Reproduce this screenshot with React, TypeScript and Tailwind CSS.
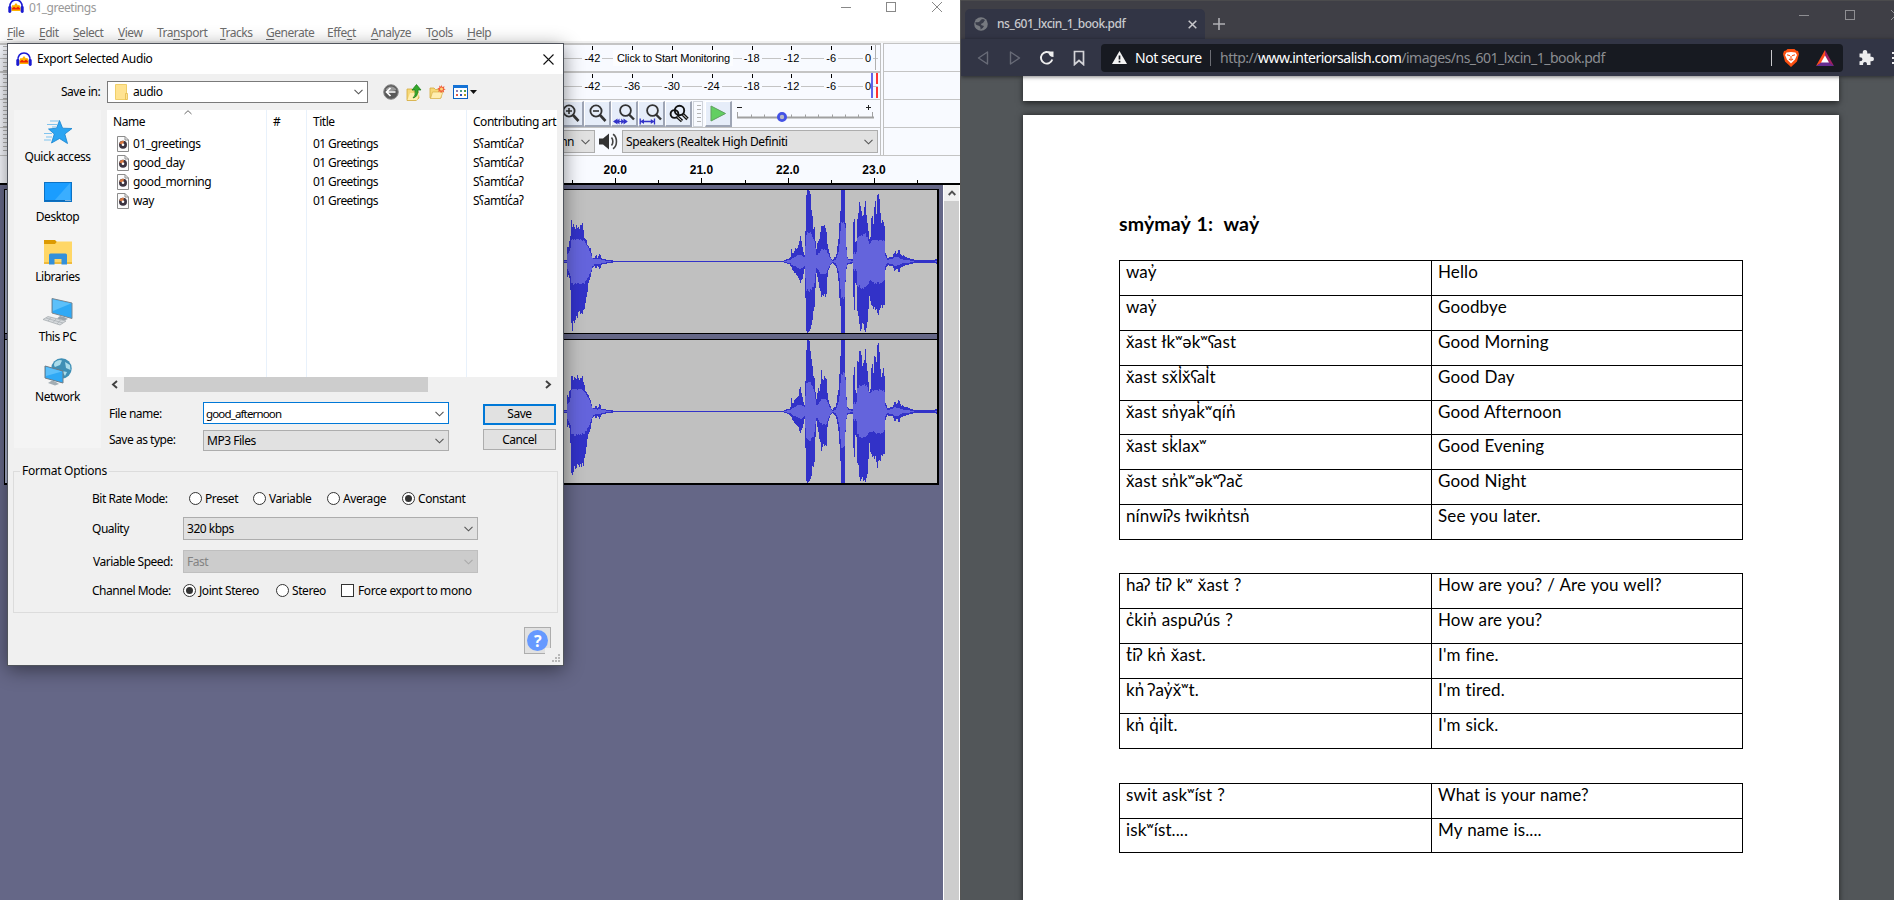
import React from "react";

/* ---------- shared bits ---------- */

const UI = "font-['Noto_Sans','Open_Sans',sans-serif] text-[12px] leading-[16px] tracking-[-0.48px] whitespace-nowrap";

function Chevron({ className = "text-[#555]" }: { className?: string }) {
  return (
    <svg width="9" height="6" viewBox="0 0 9 6" className={`shrink-0 ${className}`}>
      <path d="M0.5 0.8 L4.5 4.8 L8.5 0.8" fill="none" stroke="currentColor" strokeWidth="1.1" />
    </svg>
  );
}

function Headphones() {
  return (
    <svg width="16" height="15" viewBox="0 0 16 15" className="shrink-0">
      <path d="M3.4 12 C3 6.5 5 5 6 6.5 L8 4 L10 6.5 C11.5 5 13 7 12.6 12 Z" fill="#ffb300" />
      <path d="M4 9.5 L6 7.8 L8 9.3 L10 7.6 L12 9.5 L12 10.6 L4 10.6 Z" fill="#ee2200" />
      <path d="M2 9 C1.2 3.5 4.5 1 8 1 C11.5 1 14.8 3.5 14 9" fill="none" stroke="#1a1ad2" strokeWidth="1.6" />
      <rect x="0.3" y="7" width="3" height="7" rx="1.4" fill="#1a1ad2" />
      <rect x="12.7" y="7" width="3" height="7" rx="1.4" fill="#1a1ad2" />
    </svg>
  );
}

/* ---------- audio editor ---------- */

const MENUS: [string, string, string, string][] = [
  ["", "F", "ile", "w-[32px]"],
  ["", "E", "dit", "w-[34px]"],
  ["", "S", "elect", "w-[45px]"],
  ["", "V", "iew", "w-[39px]"],
  ["Tra", "n", "sport", "w-[63px]"],
  ["", "T", "racks", "w-[46px]"],
  ["", "G", "enerate", "w-[61px]"],
  ["Effe", "c", "t", "w-[44px]"],
  ["", "A", "nalyze", "w-[55px]"],
  ["T", "o", "ols", "w-[41px]"],
  ["", "H", "elp", "w-[30px]"],
];

/* x, outer up, outer down, inner up, inner down (in thirds of a pixel) */
const ENVELOPE: number[][] = [
  [39, 4, 4, 2, 2], [50, 4, 4, 2, 2], [51, 62, 60, 20, 20], [54, 35, 35, 25, 25], [58, 64, 50, 30, 35], [61, 55, 55, 30, 35],
  [63, 120, 195, 68, 68], [66, 118, 203, 68, 68], [72, 98, 175, 68, 70], [78, 102, 168, 66, 70], [90, 104, 158, 66, 68],
  [98, 116, 168, 66, 68], [104, 74, 140, 60, 66], [110, 64, 110, 50, 55], [116, 48, 64, 38, 45], [122, 36, 48, 25, 32],
  [127, 12, 18, 10, 15], [135, 12, 12, 6, 8], [138, 24, 26, 8, 8], [142, 8, 12, 6, 8], [150, 26, 24, 8, 8], [155, 8, 8, 4, 4],
  [180, 5, 5, 2, 2], [188, 4, 4, 0, 0], [189, 1.5, 1.5, 0, 0], [701, 1.5, 1.5, 0, 0], [703, 5, 4, 2, 2], [718, 9, 8, 4, 4],
  [722, 14, 14, 6, 6], [725, 44, 18, 8, 10], [728, 22, 26, 10, 12], [736, 40, 36, 14, 14], [745, 45, 45, 20, 20], [751, 78, 68, 20, 22],
  [757, 48, 52, 18, 20], [765, 14, 18, 12, 14], [768, 180, 205, 80, 84], [772, 215, 215, 85, 86], [780, 212, 206, 90, 90],
  [786, 148, 190, 76, 80], [790, 112, 158, 70, 74], [795, 88, 140, 60, 60], [798, 26, 24, 18, 20], [803, 62, 50, 20, 22],
  [810, 72, 85, 30, 34], [815, 124, 118, 38, 38], [819, 98, 102, 38, 38], [829, 106, 110, 36, 38], [833, 48, 36, 26, 26],
  [840, 18, 14, 12, 10], [847, 3, 3, 2, 2], [852, 12, 10, 3, 3], [858, 14, 14, 6, 6], [865, 62, 52, 26, 26], [870, 150, 130, 60, 60],
  [872, 160, 150, 100, 90], [873, 216, 216, 115, 110], [885, 216, 216, 115, 110], [886, 120, 75, 110, 60], [889, 50, 25, 40, 20],
  [893, 10, 8, 5, 4], [908, 6, 6, 2, 2], [909, 108, 90, 20, 20], [914, 132, 155, 30, 30], [917, 48, 50, 20, 20], [920, 60, 80, 30, 30],
  [922, 140, 150, 72, 70], [932, 186, 210, 78, 78], [938, 125, 190, 82, 80], [946, 182, 213, 82, 80], [952, 128, 192, 75, 75],
  [958, 62, 95, 55, 60], [961, 65, 120, 55, 60], [966, 158, 130, 62, 62], [970, 112, 142, 62, 62], [975, 182, 145, 65, 65],
  [979, 150, 145, 65, 65], [983, 208, 165, 65, 65], [989, 172, 142, 65, 65], [994, 108, 136, 65, 64], [1000, 128, 136, 65, 62],
  [1004, 105, 134, 60, 58], [1006, 30, 26, 18, 15], [1012, 10, 12, 5, 5], [1028, 14, 14, 8, 8], [1035, 32, 32, 14, 14], [1041, 20, 20, 12, 12],
  [1047, 40, 36, 12, 12], [1052, 18, 18, 8, 8], [1060, 18, 14, 6, 5], [1080, 9, 8, 3, 3], [1100, 4, 4, 0, 0], [1154, 4, 4, 0, 0], [1160, 9, 8, 3, 3],
];

function sample(x: number): number[] {
  let i = 0;
  while (i < ENVELOPE.length - 2 && ENVELOPE[i + 1][0] < x) i++;
  const a = ENVELOPE[i];
  const b = ENVELOPE[i + 1];
  const t = Math.min(1, Math.max(0, (x - a[0]) / (b[0] - a[0])));
  return [1, 2, 3, 4].map((k) => a[k] + (b[k] - a[k]) * t);
}

function noise(n: number): number {
  const s = Math.sin(n * 12.9898) * 43758.5453;
  return s - Math.floor(s);
}

function Waveform({ seed }: { seed: number }) {
  const outer: React.ReactNode[] = [];
  const inner: React.ReactNode[] = [];
  for (let c = 0; c < 374; c++) {
    const [up, down, iu, id] = sample(39 + c * 3 + 1.5);
    const j1 = up > 6 && up < 200 ? 0.88 + 0.2 * noise(c + seed) : 1;
    const j2 = down > 6 && down < 200 ? 0.92 + 0.14 * noise(c * 3 + seed) : 1;
    const top = Math.min(71.5, (up * j1) / 3);
    const bot = Math.min(71.5, (down * j2) / 3);
    outer.push(<rect key={c} x={c} y={71.5 - top} width="1" height={top + bot} />);
    if (iu > 1) {
      const a = (iu * (0.94 + 0.1 * noise(c * 7 + seed))) / 3;
      const b = (id * (0.94 + 0.1 * noise(c * 5 + seed))) / 3;
      inner.push(<rect key={c} x={c} y={71.5 - a} width="1" height={a + b} />);
    }
  }
  return (
    <svg width="374" height="143" viewBox="0 0 374 143" shapeRendering="crispEdges" className="ml-auto block">
      <g fill="#3232c8">{outer}</g>
      <g fill="#6464dc">{inner}</g>
    </svg>
  );
}

function MeterScale({ values }: { values: string[] }) {
  return (
    <div className="absolute top-0 left-[573px] flex h-[27px]">
      {values.map((v, i) => (
        <div key={i} className="flex w-[39.8px] flex-col items-center">
          <div className="mt-[1px] h-[4px] w-px bg-black" />
          {v && (
            <div className={`mt-[2px] bg-[#f8faff] px-[2px] font-['Liberation_Sans',sans-serif] text-[11px] leading-[12px] text-black ${v === "0" ? "mr-[7px]" : "mr-px"}`}>{v}</div>
          )}
        </div>
      ))}
    </div>
  );
}

function Grip({ className }: { className: string }) {
  return <div className={`bg-[repeating-linear-gradient(to_bottom,#b4b4b4_0_1px,transparent_1px_4px)] ${className}`} />;
}

function ToolButton({ children }: { children: React.ReactNode }) {
  return (
    <div className="mt-px flex h-[26px] w-[27px] items-center justify-center border-r-2 border-b-2 border-[#9ea5b5] border-t border-l border-t-white border-l-white bg-[#e6edf9]">
      {children}
    </div>
  );
}

function Lens({ children }: { children?: React.ReactNode }) {
  return (
    <svg width="24" height="23" viewBox="0 0 24 23" className="shrink-0">
      <path d="M14.500 12.500 L20.500 19" stroke="#333" strokeWidth="2.6" />
      <circle cx="11" cy="9" r="5.600" fill="none" stroke="#333" strokeWidth="1.8" />
      {children}
    </svg>
  );
}

function ZoomTools() {
  return (
    <div className="ml-[557px] flex">
      <ToolButton>
        <Lens><path d="M8 9H14M11 6V12" stroke="#333" strokeWidth="1.6" /></Lens>
      </ToolButton>
      <ToolButton>
        <Lens><path d="M8 9H14" stroke="#333" strokeWidth="1.6" /></Lens>
      </ToolButton>
      <ToolButton>
        <svg width="24" height="23" viewBox="0 0 24 23" className="shrink-0">
          <path d="M16.500 12 L22 17.500" stroke="#333" strokeWidth="2.4" />
          <circle cx="13.500" cy="8.500" r="5.400" fill="none" stroke="#333" strokeWidth="1.8" />
          <path d="M2 19.500H15" stroke="#3232c8" strokeWidth="1.2" />
          <path d="M1 19.500L5.500 16.500v6zM7.500 16.500v6L4.500 19.500zM9.200 16.500L12 19.500L9.200 22.500zM15.800 19.500L11.500 16.500v6z" fill="#3232c8" />
        </svg>
      </ToolButton>
      <ToolButton>
        <svg width="24" height="23" viewBox="0 0 24 23" className="shrink-0">
          <path d="M16.500 12 L22 17.500" stroke="#333" strokeWidth="2.4" />
          <circle cx="13.500" cy="8.500" r="5.400" fill="none" stroke="#333" strokeWidth="1.8" />
          <path d="M1.500 19.500H15M1.200 16.500V22.500M15.500 16.500V22.500" stroke="#3232c8" strokeWidth="1.3" />
          <path d="M1.500 19.500L5 17v5zM15.200 19.500L11.800 17v5z" fill="#3232c8" />
        </svg>
      </ToolButton>
      <ToolButton>
        <svg width="24" height="23" viewBox="0 0 24 23" className="shrink-0" fill="none" stroke="#111">
          <path d="M17 12.500 L21.500 17" strokeWidth="3.4" />
          <path d="M17 12.500 L21 16.500" stroke="#fff" strokeWidth="1" />
          <circle cx="13.500" cy="8.500" r="4.700" strokeWidth="1.900" />
          <circle cx="8.500" cy="12" r="3.900" strokeWidth="1.900" />
          <path d="M11.500 15 L16 19" strokeWidth="3.2" />
          <path d="M11.500 15 L15.500 18.600" stroke="#fff" strokeWidth="1" />
        </svg>
      </ToolButton>
      <div className="mt-px ml-px h-[26px] w-[10px] border border-[#cfd3da] pt-[3px] pl-[3px]">
        <Grip className="h-[18px] w-[4px]" />
      </div>
      <div className="ml-[2px]">
        <ToolButton>
          <svg width="24" height="23" viewBox="0 0 24 23" className="shrink-0">
            <path d="M5 4 L19.500 11.500 L5 19 Z" fill="#62cf62" stroke="#5f9f5f" strokeWidth="1" />
          </svg>
        </ToolButton>
      </div>
      <svg width="142" height="27" viewBox="0 0 142 27" className="ml-[2px]">
        <path d="M3 7.500H8M132 7.500H137M134.500 5V10" stroke="#222" strokeWidth="1" />
        <path d="M3 17.500H140" stroke="#a0a0a0" strokeWidth="2" />
        <path d="M3.5 12V18M17.5 14.5V18M30.5 14.5V18M44.5 14.5V18M57.5 14.5V18M71.5 14.5V18M84.5 14.5V18M98.5 14.5V18M111.500 14.5V18M124.5 14.5V18M138.5 12V18" stroke="#a0a0a0" />
        <circle cx="48" cy="17" r="3.6" fill="#b8b8c4" stroke="#4452e6" strokeWidth="2.8" />
      </svg>
    </div>
  );
}

function Timeline() {
  const labels = ["20.0", "21.0", "22.0", "23.0"];
  return (
    <div className="flex h-[29px] overflow-hidden border-b-2 border-black bg-[#f8faff]">
      <div className="ml-[572px] flex">
        {labels.map((l) => (
          <div key={l} className="flex w-[86.3px] shrink-0 flex-col">
            <div className="mt-[7px] text-center font-['Liberation_Sans',sans-serif] text-[12px] leading-[15px] font-bold text-black">{l}</div>
            <div className="mt-auto flex items-end">
              <div className="h-[3px] w-px bg-black" />
              <div className="ml-[42px] h-[5px] w-px bg-black" />
            </div>
          </div>
        ))}
        <div className="mt-auto h-[3px] w-px bg-black" />
      </div>
    </div>
  );
}

function AudioEditor() {
  return (
    <div className="relative flex h-[900px] w-[961px] flex-col overflow-hidden border-r border-[#555] bg-white">
      <div className="flex h-[22px] items-start">
        <div className="-mt-px ml-[8px]"><Headphones /></div>
        <span className={`${UI} ml-[5px] text-[#999]`}>01_greetings</span>
        <svg width="10" height="16" className="ml-auto"><path d="M0 7.500H10" stroke="#888" /></svg>
        <svg width="10" height="16" className="ml-[35px]"><rect x="0.5" y="2.5" width="9" height="9" fill="none" stroke="#888" /></svg>
        <svg width="10" height="16" className="mr-[18px] ml-[36px]"><path d="M0 2L10 12M10 2L0 12" stroke="#888" /></svg>
      </div>
      <div className={`${UI} flex h-[19px] pt-[3px] pl-[7px] text-[#6d6d6d]`}>
        {MENUS.map(([a, b, c, w]) => (
          <div key={a + b + c} className={w}>
            {a}
            <span className="underline underline-offset-2">{b}</span>
            {c}
          </div>
        ))}
      </div>
      <div className="h-[2px] bg-[#f0f0f0]" />

      <div className="flex h-[113px] bg-[#f8faff]">
        <div className="flex w-[881px] flex-col border-r border-[#c0c0c0]">
          <div className="relative h-[28px] border-t-2 border-[#c4c4c4]">
            <div className="mt-[13px] h-px w-[878px] bg-[#c4c4c4]" />
            <MeterScale values={["-42", "", "", "", "-18", "-12", "-6", "0"]} />
            <div className="absolute top-[5px] left-[613px] h-[16px] w-[120px] bg-[#fcfdff] pl-[4px] font-['Liberation_Sans',sans-serif] text-[11px] leading-[16px] tracking-[-0.15px] whitespace-nowrap text-black">
              Click to Start Monitoring
            </div>
            <div className="absolute top-0 right-[4px] h-[25px] w-px bg-[#b0b0b0]" />
          </div>
          <div className="relative h-[28px] border-t-2 border-[#c4c4c4]">
            <div className="mt-[13px] h-px w-[878px] bg-[#c4c4c4]" />
            <MeterScale values={["-42", "-36", "-30", "-24", "-18", "-12", "-6", "0"]} />
            <div className="absolute top-0 left-[871px] h-[25px] w-[2px] bg-[#6262ea]" />
            <div className="absolute top-0 left-[876px] h-[11px] w-[2px] bg-[#ff3232]" />
            <div className="absolute top-[14px] left-[876px] h-[11px] w-[2px] bg-[#ff3232]" />
          </div>
          <div className="h-[28px] border-t border-[#c4c4c4]"><ZoomTools /></div>
          <div className={`${UI} flex h-[29px] border-t border-[#c4c4c4] pt-[2px]`}>
            <div className="ml-[400px] flex h-[23px] w-[195px] items-center justify-end border border-[#adadad] bg-[#e1e1e1] pr-[4px] text-black">
              <span className="mr-[7px]">nn</span>
              <Chevron />
            </div>
            <svg width="20" height="20" viewBox="0 0 20 20" className="mt-[2px] ml-[4px]">
              <path d="M0 6.500H4L10 1.500V17.500L4 12.500H0Z" fill="#333" />
              <path d="M12.500 5.500C14.300 7.500 14.300 11.500 12.500 13.500" fill="none" stroke="#444" strokeWidth="1.6" />
              <path d="M14 2.200C18.600 5 18.600 14 14 16.800" fill="none" stroke="#444" strokeWidth="1.6" />
            </svg>
            <div className="ml-[3px] flex h-[23px] w-[256px] items-center justify-between border border-[#adadad] bg-[#e1e1e1] pr-[4px] pl-[3px] text-black">
              <span className="tracking-[-0.38px]">Speakers (Realtek High Definiti</span>
              <Chevron />
            </div>
          </div>
        </div>
        <div className="ml-[2px] flex w-[77px] flex-col border-l border-[#c0c0c0]">
          <div className="h-[28px] border-t border-[#c4c4c4]" />
          <div className="h-[28px] border-t border-[#c4c4c4]" />
          <div className="h-[28px] border-t border-[#c4c4c4]" />
          <div className="h-[29px] border-t border-[#c4c4c4]" />
        </div>
        <Grip className="absolute top-[46px] left-[3px] h-[106px] w-[4px]" />
      </div>
      <div className="h-px shrink-0 -mt-px bg-[#c4c4c4]" />
      <Timeline />

      <div className="flex flex-1 bg-[#656787]">
        <div className="flex w-[943px] flex-col pt-[4px] pl-[4px]">
          <div className="flex h-[296px] w-[935px] flex-col border-t border-r-2 border-b-2 border-l border-black bg-[#c0c0c0] shadow-[inset_2px_0_0_#aeb6d0]">
            <Waveform seed={3} />
            <div className="h-[7px] border-y border-black bg-[#656787]" />
            <Waveform seed={41} />
          </div>
        </div>
        <div className="flex w-[17px] flex-col border-x border-white bg-[#f0f0f0]">
          <div className="flex h-[16px] items-center justify-center">
            <svg width="8" height="6"><path d="M0.700 5L4 1.700L7.300 5" fill="none" stroke="#505050" strokeWidth="1.900" /></svg>
          </div>
          <div className="flex-1 bg-[#cdcdcd]" />
        </div>
      </div>
    </div>
  );
}

/* ---------- export dialog ---------- */

function QuickAccessIcon() {
  return (
    <svg width="32" height="28" viewBox="0 0 32 28">
      <path d="M17.500 2.500L20.600 10.200L30 10.500L22.800 16L25.500 25.500L17.500 20.500L9.500 25L12.300 16L6.500 11L14.500 10.200Z" fill="#2ca5f2" stroke="#1583cf" strokeWidth="0.800" />
      <path d="M8 3H17M5 6.500H15M10 9H14M2 15.500H10M4 19H10M2 22H9" stroke="#7fc3ee" strokeWidth="1" />
    </svg>
  );
}

function DesktopIcon() {
  return (
    <svg width="32" height="28" viewBox="0 0 32 28">
      <rect x="2.500" y="4.500" width="27" height="19" fill="#1a9dff" stroke="#0c72c4" />
      <path d="M12 23L28 5V23Z" fill="#3aaeff" />
      <path d="M3 22.500H29" stroke="#0c6ab8" />
      <path d="M23.500 22.500H29" stroke="#fff" strokeDasharray="1 1" />
    </svg>
  );
}

function LibrariesIcon() {
  return (
    <svg width="32" height="28" viewBox="0 0 32 28">
      <path d="M2 2H13L15 4V6H2Z" fill="#dc9a02" />
      <path d="M2 6H13L15 3.500H30V26H2Z" fill="#ffd766" />
      <path d="M2 24H30V26H2Z" fill="#f0bb3c" />
      <path d="M7 26.500V17Q7 15.500 8.500 15.500H23.500Q25 15.500 25 17V26.500H19.500V21H12.500V26.500Z" fill="#3390da" />
    </svg>
  );
}

function PcIcon() {
  return (
    <svg width="32" height="28" viewBox="0 0 32 28">
      <path d="M10 0.500L30 5V20.500L10 15Z" fill="#2fa9f5" stroke="#7c8790" />
      <path d="M11 1.500L29 5.500L11 13Z" fill="#5cc0fa" />
      <path d="M18 18L22 19L26 21L22 22.500L15 20.500Z" fill="#9aa4ab" />
      <path d="M6 18.500L24 23L18 27L1 21.500Z" fill="#d5d9dc" stroke="#a0a6aa" strokeWidth="0.700" />
      <path d="M4 20L21 25M9 19.500L6 23M14 21L11 24.500M18.500 22L15 26" stroke="#a6acb0" strokeWidth="0.700" />
    </svg>
  );
}

function NetworkIcon() {
  return (
    <svg width="32" height="28" viewBox="0 0 32 28">
      <circle cx="19.500" cy="10.500" r="10.200" fill="#3f8fb5" />
      <path d="M13 4Q17 1 20 2.500L18 7L13 9Q11 7 13 4ZM23 4L28 7L28.500 12L24 10ZM20 13L25 14L23 18Z" fill="#a9dceb" />
      <path d="M3 8L21 13V25L3 20Z" fill="#2fa9f5" stroke="#6f7c85" />
      <path d="M4 9L20 13.500L4 18Z" fill="#5cc0fa" />
      <path d="M10 22.500L13 23.500L17 26L13 27.500L6 25Z" fill="#a3adb3" />
    </svg>
  );
}

const PLACES: [string, () => React.ReactElement][] = [
  ["Quick access", QuickAccessIcon],
  ["Desktop", DesktopIcon],
  ["Libraries", LibrariesIcon],
  ["This PC", PcIcon],
  ["Network", NetworkIcon],
];

function AudioFileIcon() {
  return (
    <svg width="12" height="16" viewBox="0 0 12 16" className="shrink-0">
      <path d="M0.500 0.500H8L11.500 4V15.500H0.500Z" fill="#fbfbfb" stroke="#8c8c8c" />
      <path d="M8 0.500V4H11.500" fill="none" stroke="#8c8c8c" />
      <circle cx="6" cy="8.800" r="4" fill="#3b3340" />
      <path d="M2.300 7.500A4 4 0 0 1 7 4.900L6 8.800Z" fill="#d9773f" />
      <circle cx="6" cy="8.800" r="1.300" fill="#fff" />
    </svg>
  );
}

function FileList() {
  const files = ["01_greetings", "good_day", "good_morning", "way"];
  const edge = "border-r border-[#e8f1fb]";
  return (
    <div className="flex h-[267px] w-[450px] overflow-hidden bg-white text-black">
      <div className={`relative w-[160px] ${edge}`}>
        <svg width="8" height="5" className="absolute top-0 left-[77px]"><path d="M0.500 4L4 0.700L7.500 4" fill="none" stroke="#666" /></svg>
        <div className="h-[24px] pt-[4px] pl-[6px]">Name</div>
        {files.map((f) => (
          <div key={f} className="flex h-[19px] items-center gap-[4px] pl-[10px]">
            <AudioFileIcon />
            <span className="tracking-[-0.42px]">{f}</span>
          </div>
        ))}
      </div>
      <div className={`w-[40px] ${edge}`}>
        <div className="pt-[4px] pl-[6px]">#</div>
      </div>
      <div className={`w-[160px] ${edge}`}>
        <div className="h-[25px] pt-[4px] pl-[6px]">Title</div>
        {files.map((f) => <div key={f} className="h-[19px] pt-[1px] pl-[6px] tracking-[-0.58px]">01 Greetings</div>)}
      </div>
      <div className="w-[90px]">
        <div className="h-[25px] pt-[4px] pl-[6px]">Contributing art</div>
        {files.map((f) => <div key={f} className="h-[19px] pt-[1px] pl-[6px]">Sʕamtíc̓aʔ</div>)}
      </div>
    </div>
  );
}

function Radio({ label, on, className }: { label: string; on?: boolean; className: string }) {
  return (
    <div className={`flex items-center gap-[3px] ${className}`}>
      <div className="flex size-[13px] shrink-0 items-center justify-center rounded-full border border-[#333] bg-white">
        {on && <div className="size-[7px] rounded-full bg-[#333]" />}
      </div>
      <span className="tracking-[-0.42px]">{label}</span>
    </div>
  );
}

function ExportDialog() {
  return (
    <div className={`${UI} absolute top-[43px] left-[7px] flex h-[623px] w-[557px] flex-col border border-[#50545c] bg-[#f0f0f0] text-black shadow-[0_4px_18px_rgba(0,0,0,0.45)]`}>
      <div className="flex h-[30px] items-center bg-white pl-[8px]">
        <Headphones />
        <span className="ml-[5px] tracking-[-0.38px]">Export Selected Audio</span>
        <svg width="11" height="11" className="mr-[9px] ml-auto"><path d="M0.500 0.500L10.500 10.500M10.500 0.500L0.500 10.500" stroke="#111" strokeWidth="1.100" /></svg>
      </div>

      <div className="flex h-[36px] items-center">
        <span className="ml-[53px] w-[46px]">Save in:</span>
        <div className="flex h-[22px] w-[261px] items-center border border-[#7a7a7a] bg-white pr-[4px] pl-[7px]">
          <svg width="13" height="16" viewBox="0 0 13 16"><path d="M0.500 0.500H11.500V15.500H0.500Z" fill="#ffe391" stroke="#f0cf6a" /><path d="M10.500 9.500H12.500V15.500H10.500Z" fill="#ffe391" stroke="#e3bb4d" strokeWidth="0.800" /></svg>
          <span className="ml-[5px]">audio</span>
          <Chevron className="ml-auto text-[#555]" />
        </div>
        <svg width="16" height="16" viewBox="0 0 16 16" className="ml-[15px]">
          <circle cx="8" cy="8" r="7.300" fill="#585858" stroke="#8a8a8a" />
          <path d="M2.500 6A6 6 0 0 1 13.500 6Q8 8 2.500 6Z" fill="#999" />
          <path d="M7.500 4L3.500 8L7.500 12M4 8H12.500" fill="none" stroke="#fff" strokeWidth="1.700" />
        </svg>
        <svg width="16" height="17" viewBox="0 0 16 17" className="ml-[7px]">
          <path d="M1 5H6L7 7H12L13 14L10 16.500H1Z" fill="#f6d878" stroke="#d3a93b" strokeWidth="0.800" />
          <path d="M4 9H13.500L11 16H1.500Z" fill="#ffeeb0" />
          <path d="M7 14Q10 12 9 6H6L10.500 0.500L15 6H12Q12 13 7 14Z" fill="#35a82c" stroke="#177a12" strokeWidth="0.700" />
        </svg>
        <svg width="17" height="16" viewBox="0 0 17 16" className="ml-[7px]">
          <path d="M1 4H5L6.500 5.500H12V14H1Z" fill="#f6d878" stroke="#d3a93b" strokeWidth="0.800" />
          <path d="M3.500 8H14L11.500 14.500H1.500Z" fill="#ffeeb0" stroke="#d3a93b" strokeWidth="0.600" />
          <path d="M12.500 0.800L13.300 2.900L15.500 2.200L14.800 4.400L16.700 5.300L14.700 6.300L15.200 8.500L13.200 7.600L12 9.300L11.200 7.300L9 7.800L9.900 5.800L8.300 4.400L10.400 3.800L10.200 1.600L12 2.700Z" fill="#f0603a" />
          <circle cx="12.500" cy="5.100" r="1.500" fill="#ffd27a" />
        </svg>
        <svg width="24" height="15" viewBox="0 0 24 15" className="ml-[7px]">
          <rect x="0.500" y="0.500" width="14" height="13" fill="#fff" stroke="#0a5fc0" />
          <rect x="0" y="0" width="15" height="3" fill="#1673d6" />
          <g><rect x="3" y="5" width="2" height="2" fill="#8a7fb5" /><rect x="7" y="5" width="2" height="2" fill="#4d9e8c" /><rect x="11" y="5" width="2" height="2" fill="#4d9e4d" /><rect x="3" y="9" width="2" height="2" fill="#e05a4a" /><rect x="7" y="9" width="2" height="2" fill="#2a52b8" /><rect x="11" y="9" width="2" height="2" fill="#b59a22" /></g>
          <path d="M17 5H24L20.500 9Z" fill="#111" />
        </svg>
      </div>

      <div className="flex">
        <div className="ml-[6px] flex h-[338px] w-[87px] flex-col bg-[#f4f4f4]">
          {PLACES.map(([name, Icon]) => (
            <div key={name} className="flex h-[60px] flex-col items-center pt-[8px]">
              <Icon />
              <span className="mt-[3px]">{name}</span>
            </div>
          ))}
        </div>
        <div className="ml-[6px] flex flex-col">
          <FileList />
          <div className="flex h-[15px] items-center">
            <svg width="17" height="9"><path d="M10 1L6 4.500L10 8" fill="none" stroke="#404040" strokeWidth="1.900" /></svg>
            <div className="h-[15px] w-[304px] bg-[#cdcdcd]" />
            <svg width="10" height="9" className="mr-[2px] ml-auto"><path d="M1 1L5 4.500L1 8" fill="none" stroke="#404040" strokeWidth="1.900" /></svg>
          </div>
          <div className="mt-[10px] flex h-[22px] items-center">
            <span className="mt-[2px] ml-[2px] w-[94px]">File name:</span>
            <div className="flex h-[22px] w-[246px] items-center justify-between border border-[#0078d7] bg-white pt-px pr-[4px] pl-[2px]">
              <span className="text-[11.500px] tracking-[-0.85px]">good_afternoon</span>
              <Chevron />
            </div>
            <div className="mt-[2px] ml-[34px] flex h-[21px] w-[73px] items-center justify-center border-2 border-[#0078d7] bg-[#e1e1e1]">Save</div>
          </div>
          <div className="mt-[5px] flex h-[22px] items-center">
            <span className="ml-[2px] w-[94px]">Save as type:</span>
            <div className="mt-px flex h-[21px] w-[246px] items-center justify-between border border-[#adadad] bg-[#e1e1e1] pr-[4px] pl-[3px]">
              <span>MP3 Files</span>
              <Chevron />
            </div>
            <div className="mb-px ml-[34px] flex h-[21px] w-[73px] items-center justify-center border border-[#adadad] bg-[#e1e1e1]">Cancel</div>
          </div>
        </div>
      </div>

      <div className="relative mt-[20px] ml-[5px] h-[142px] w-[545px] border border-[#dcdcdc]">
        <span className="absolute -top-[9px] left-[6px] bg-[#f0f0f0] px-[2px] tracking-[-0.25px]">Format Options</span>
        <div className="mt-[19px] flex h-[15px] items-center">
          <span className="ml-[78px] w-[97px]">Bit Rate Mode:</span>
          <Radio label="Preset" className="w-[64px]" />
          <Radio label="Variable" className="w-[74px]" />
          <Radio label="Average" className="w-[75px]" />
          <Radio label="Constant" on className="w-[80px]" />
        </div>
        <div className="mt-[11px] flex h-[23px] items-center">
          <span className="ml-[78px] w-[91px]">Quality</span>
          <div className="flex h-[23px] w-[295px] items-center justify-between border border-[#adadad] bg-[#e1e1e1] pr-[4px] pl-[3px]">
            <span>320 kbps</span>
            <Chevron />
          </div>
        </div>
        <div className="mt-[10px] flex h-[23px] items-center">
          <span className="ml-[79px] w-[90px]">Variable Speed:</span>
          <div className="flex h-[23px] w-[295px] items-center justify-between border border-[#bfbfbf] bg-[#cccccc] pr-[4px] pl-[3px] text-[#838383]">
            <span>Fast</span>
            <Chevron className="text-[#aaa]" />
          </div>
        </div>
        <div className="mt-[10px] flex h-[15px] items-center">
          <span className="ml-[78px] w-[91px]">Channel Mode:</span>
          <Radio label="Joint Stereo" on className="w-[93px]" />
          <Radio label="Stereo" className="w-[65px]" />
          <div className="size-[13px] border border-[#333] bg-white" />
          <span className="ml-[4px] tracking-[-0.4px]">Force export to mono</span>
        </div>
      </div>

      <div className="relative mt-[14px] ml-auto mr-[12px] flex h-[27px] w-[27px] items-center justify-center border border-[#adadad] bg-[#e1e1e1]">
        <div className="flex size-[21px] items-center justify-center rounded-full bg-[#6699ff] font-['Open_Sans',sans-serif] text-[16px] font-bold text-white">?</div>
        <div className="absolute -right-px -bottom-px size-[6px] bg-[#f0f0f0]" />
      </div>
      <svg width="9" height="9" className="absolute right-[2px] bottom-[2px]" fill="#b8b8b8">
        <path d="M6 0h2v2H6zM3 3h2v2H3zM6 3h2v2H6zM0 6h2v2H0zM3 6h2v2H3zM6 6h2v2H6z" />
      </svg>
    </div>
  );
}

/* ---------- browser with the lesson book ---------- */

const GREETINGS: [string, string][] = [
  ["way̓", "Hello"],
  ["way̓", "Goodbye"],
  ["x̌ast łkʷəkʷʕast", "Good Morning"],
  ["x̌ast sx̌l̓x̌ʕal̓t", "Good Day"],
  ["x̌ast sn̓yak̓ʷqín̓", "Good Afternoon"],
  ["x̌ast sk̓laxʷ", "Good Evening"],
  ["x̌ast sn̓kʷəkʷʔač", "Good Night"],
  ["nínwiʔs łwikn̓tsn̓", "See you later."],
];
const FEELINGS: [string, string][] = [
  ["haʔ t̓iʔ kʷ x̌ast ?", "How are you? / Are you well?"],
  ["c̓kin̓ aspuʔús ?", "How are you?"],
  ["t̓iʔ kn̓ x̌ast.", "I'm fine."],
  ["kn̓ ʔay̓x̌ʷt.", "I'm tired."],
  ["kn̓ q̓il̓t.", "I'm sick."],
];
const NAMES: [string, string][] = [
  ["swit askʷíst ?", "What is your name?"],
  ["iskʷíst....", "My name is...."],
];

function PhraseTable({ rows, className }: { rows: [string, string][]; className: string }) {
  return (
    <div className={`flex w-[624px] flex-col border-t border-l border-black ${className}`}>
      {rows.map(([a, b], i) => (
        <div key={i} className="flex flex-1 border-b border-black">
          <div className="-mt-px w-[312px] border-r border-black pl-[6px]">{a}</div>
          <div className="-mt-px w-[311px] border-r border-black pl-[6px]">{b}</div>
        </div>
      ))}
    </div>
  );
}

function Browser() {
  return (
    <div className="flex h-[900px] w-[933px] flex-col overflow-hidden bg-[#525659]">
      <div className="flex h-[39px] shrink-0 items-end border-t border-[#4b4b4d] bg-[#3f3f46]">
        <div className="ml-[4px] flex h-[30px] w-[240px] items-center rounded-t-[5px] bg-[#323545]">
          <svg width="14" height="14" viewBox="0 0 14 14" className="ml-[9px]">
            <circle cx="7" cy="7" r="6.800" fill="#777a80" />
            <path d="M1.500 5Q5 6 6 4Q7 2 9 2L11 3L9 6Q7 6 7 8L10 9Q9 12 6.500 12.500Q7 9 4 8.500Q1 8 1.500 5Z" fill="#3a3d4a" />
          </svg>
          <span className="ml-[9px] font-['Noto_Sans',sans-serif] text-[12px] leading-[16px] font-medium tracking-[-0.47px] text-[#c9cace]">ns_601_lxcin_1_book.pdf</span>
          <svg width="9" height="9" className="mr-[8px] ml-auto"><path d="M0.700 0.700L8.300 8.300M8.300 0.700L0.700 8.300" stroke="#c8c8cc" strokeWidth="1.500" /></svg>
        </div>
        <svg width="12" height="12" className="mb-[9px] ml-[8px]"><path d="M0 6H12M6 0V12" stroke="#b0b0b4" strokeWidth="1.600" /></svg>
        <svg width="95" height="30" viewBox="0 0 95 30" className="mb-[8px] ml-auto" fill="none" stroke="#8e8e92">
          <path d="M0 14.500H10M92 9L102 19M92 19L102 9" />
          <rect x="46.500" y="9.500" width="9" height="9" />
        </svg>
      </div>

      <div className="z-10 flex h-[37px] shrink-0 items-center bg-[#323545] shadow-[0_1px_4px_rgba(0,0,0,0.5)]">
        <svg width="110" height="16" viewBox="0 0 110 16" className="ml-[16px]" fill="none">
          <path d="M1.500 8L10.500 2V14Z" stroke="#686b77" strokeWidth="1.400" strokeLinejoin="round" />
          <path d="M42.500 8L33.500 2V14Z" stroke="#686b77" strokeWidth="1.400" strokeLinejoin="round" />
          <path d="M73.700 3.500A5.800 5.800 0 1 0 75.300 9.500" stroke="#eee" strokeWidth="1.900" />
          <path d="M71 1.500H76.500V7Q72 7 71 1.500Z" fill="#eee" />
          <path d="M97.500 1.500H106.500V14.500L102 10.500L97.500 14.500Z" stroke="#d4d4d8" strokeWidth="1.700" />
        </svg>
        <div className="ml-[14px] flex h-[28px] w-[742px] items-center rounded-[4px] bg-[#171a21] font-['Noto_Sans',sans-serif] text-[14px] whitespace-nowrap">
          <svg width="15" height="13" viewBox="0 0 15 13" className="ml-[11px]">
            <path d="M7.500 0L15 13H0Z" fill="#f4f4f4" />
            <path d="M7.500 4.500V8.500M7.500 9.800V11.400" stroke="#171a21" strokeWidth="1.700" />
          </svg>
          <span className="ml-[8px] w-[75px] tracking-[-0.45px] text-white">Not secure</span>
          <div className="h-[16px] w-px bg-[#6c6e74]" />
          <span className="ml-[9px] tracking-[-0.5px] text-[#8b8d91]">
            http://<span className="text-white">www.interiorsalish.com</span>/images/ns_601_lxcin_1_book.pdf
          </span>
          <div className="ml-auto h-[16px] w-px bg-[#c8c8cc]" />
          <svg width="16" height="18" viewBox="0 0 16 18" className="ml-[11px]">
            <path d="M4.500 0H11.500L13 1.500L15 2L16 5L14 12.500L8 18L2 12.500L0 5L1 2L3 1.500Z" fill="#fb4f10" />
            <path d="M3.500 3.500L8 3L12.500 3.500L14 6L12 10.500L8 14.500L4 10.500L2 6Z" fill="#fff" />
            <path d="M4 5.800L7 6.800M12 5.800L9 6.800M8 7V10M6 10L8 11.200L10 10" stroke="#fb4f10" strokeWidth="1.100" fill="none" />
          </svg>
          <svg width="18" height="16" viewBox="0 0 18 16" className="mr-[9px] ml-[17px]">
            <path d="M9 0L0 16L9 11Z" fill="#ff4a1c" />
            <path d="M9 0L18 16L9 11Z" fill="#9e1f63" />
            <path d="M0 16L9 10L18 16Z" fill="#662d91" />
            <path d="M9 5.500L13 12.500H5Z" fill="#fff" />
          </svg>
        </div>
        <svg width="36" height="18" viewBox="0 0 36 18" className="ml-auto" fill="#ececee">
          <path d="M1.500 4.500H4.800Q4.200 1 7 1Q9.800 1 9.200 4.500H12.500V7.800Q16 7.300 16 10Q16 12.700 12.500 12.200V16H8.900Q9.300 13 7 13Q4.700 13 5.100 16H1.500V12.300Q4.500 12.500 4.500 10.200Q4.500 8 1.500 8.200Z" />
          <path d="M34 3h2v2h-2zM34 8h2v2h-2zM34 13h2v2h-2z" />
        </svg>
      </div>

      <div className="ml-[62px] h-[25px] w-[816px] shrink-0 bg-white shadow-[0_2px_6px_rgba(0,0,0,0.6)]" />
      <div className="mt-[14px] ml-[62px] h-[790px] w-[816px] shrink-0 bg-white pt-[97px] pl-[96px] font-['Lato','Noto_Sans',sans-serif] text-[17px] leading-[24px] tracking-[0.12px] text-black shadow-[0_0_6px_rgba(0,0,0,0.6)] [word-spacing:0.5px]">
        <h1 className="h-[48px] text-[19.500px] leading-[24px] font-bold tracking-[0.15px] whitespace-pre">smy̓may̓ 1:  way̓</h1>
        <PhraseTable rows={GREETINGS} className="h-[280px]" />
        <PhraseTable rows={FEELINGS} className="mt-[33px] h-[176px]" />
        <PhraseTable rows={NAMES} className="mt-[34px] h-[70px]" />
      </div>
    </div>
  );
}

export default function App() {
  return (
    <div className="relative flex h-[900px] w-[1894px] overflow-hidden bg-[#525659]">
      <AudioEditor />
      <Browser />
      <ExportDialog />
    </div>
  );
}
